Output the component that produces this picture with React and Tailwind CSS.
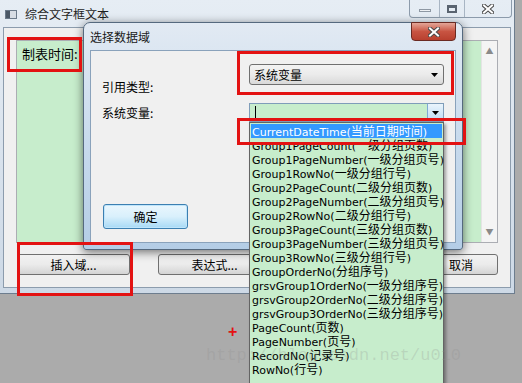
import React from "react";

const items = [
    ["CurrentDateTime", "当前日期时间"],
    ["Group1PageCount", "一级分组页数"],
    ["Group1PageNumber", "一级分组页号"],
    ["Group1RowNo", "一级分组行号"],
    ["Group2PageCount", "二级分组页数"],
    ["Group2PageNumber", "二级分组页号"],
    ["Group2RowNo", "二级分组行号"],
    ["Group3PageCount", "三级分组页数"],
    ["Group3PageNumber", "三级分组页号"],
    ["Group3RowNo", "三级分组行号"],
    ["GroupOrderNo", "分组序号"],
    ["grsvGroup1OrderNo", "一级分组序号"],
    ["grsvGroup2OrderNo", "二级分组序号"],
    ["grsvGroup3OrderNo", "三级分组序号"],
    ["PageCount", "页数"],
    ["PageNumber", "页号"],
    ["RecordNo", "记录号"],
    ["RowNo", "行号"],
];

function CloseGlyph({ className }) {
    return (
        <svg width="12" height="10" viewBox="0 0 12 10" className={className}>
            <path d="M2 1.5 L10 8.5 M10 1.5 L2 8.5" stroke="#4a4a4a" strokeWidth="4" strokeLinecap="square" />
            <path d="M2 1.5 L10 8.5 M10 1.5 L2 8.5" stroke="#ffffff" strokeWidth="2" strokeLinecap="square" />
        </svg>
    );
}

function Arrow() {
    return (
        <svg width="7" height="4" viewBox="0 0 7 4">
            <path d="M0 0 H7 L3.5 4 Z" fill="#000" />
        </svg>
    );
}

function WinButton({ children, className = "" }) {
    return (
        <div
            className={
                "flex items-center justify-center h-[21px] rounded-[3px] border border-[#707070] bg-linear-to-b from-[#f2f2f2] via-[#ebebeb] to-[#d4d4d4] " +
                className
            }
        >
            {children}
        </div>
    );
}

function App() {
    return (
        <div className="relative w-[522px] h-[383px] overflow-hidden bg-[#ababab] text-[12px] text-black font-['Noto_Sans_CJK_SC',sans-serif]">
            {/* main window */}
            <div className="flex flex-col w-[515px] h-[294px] bg-linear-to-b from-[#e6edf4] to-[#cdd9e6] border-r border-b border-[#6d7d8e]">
                <div className="flex items-center h-[27px] pl-[5px]">
                    <div className="flex w-[12px] h-[9px] border border-[#6b7a8a] bg-[#d7dde4] mt-[1px]">
                        <div className="w-[4px] h-full bg-[#4b5866]" />
                    </div>
                    <span className="ml-[8px] text-[#1e1e1e]">综合文字框文本</span>
                    <div className="ml-auto mr-[2px] self-start flex h-[18px] border border-t-0 border-[#8c9bab] rounded-b-[4px] overflow-hidden">
                        <div className="w-[30px] flex items-center justify-center border-r border-[#a8b5c3]">
                            <div className="w-[12px] h-[3px] mt-[4px] bg-[#eef1f4] border border-[#8e98a3]" />
                        </div>
                        <div className="w-[25px] flex items-center justify-center border-r border-[#a8b5c3]">
                            <div className="w-[10px] h-[8px] border-2 border-t-[3px] border-[#5a6470]" />
                        </div>
                        <div className="w-[46px] flex items-center justify-center">
                            <CloseGlyph />
                        </div>
                    </div>
                </div>
                <div className="flex-1 mx-[3px] mb-[5px] flex flex-col bg-[#f0f0f0] border border-[#8c9cad]">
                    <div className="flex mt-[12px] ml-[12px] w-[482px] h-[203px] border border-[#abadb3]">
                        <div className="flex-1 bg-[#c7edcc] pl-[5px] pt-[3px] text-[13px]">制表时间:</div>
                        <div className="w-[16px] flex flex-col items-center justify-between py-[4px] bg-[#f4f4f4] border-l border-[#e4e4e4] text-[8px] text-[#8a8a8a]">
                            <span>▲</span>
                            <span>▼</span>
                        </div>
                    </div>
                    <div className="flex mt-[11px] ml-[13px]">
                        <WinButton className="w-[113px]">插入域...</WinButton>
                        <WinButton className="w-[113px] ml-[28px]">表达式...</WinButton>
                        <WinButton className="w-[74px] ml-[153px]">取消</WinButton>
                    </div>
                </div>
            </div>

            {/* dialog */}
            <div className="absolute left-[83px] top-[22px] w-[380px] h-[228px] flex flex-col rounded-t-[7px] rounded-b-[3px] border border-[#55697e] bg-linear-to-b from-[#e2eaf3] via-[#c9dbed] to-[#b4cde6] shadow-[0_2px_10px_rgba(0,0,0,0.55)]">
                <div className="relative h-[27px] flex items-center pl-[6px]">
                    <span className="text-[#1a1a1a]">选择数据域</span>
                    <div className="absolute left-[327px] top-[-1px] w-[45px] h-[19px] flex items-center justify-center rounded-b-[4px] border border-[#6b2a22] bg-linear-to-b from-[#e3a597] via-[#c85442] to-[#b8402f]">
                        <CloseGlyph />
                    </div>
                </div>
                <div className="mx-[6px] h-[193px] flex flex-col pl-[11px] bg-[#f0f0f0] border border-[#8aa2bb]">
                    <div className="flex items-start h-[21px] mt-[13px]">
                        <span className="w-[147px] mt-[15px] leading-[16px]">引用类型:</span>
                        <div className="w-[195px] h-[21px] flex items-center justify-between pl-[4px] pr-[5px] rounded-[3px] border border-[#707070] bg-linear-to-b from-[#f3f3f3] via-[#ebebeb] to-[#d9d9d9]">
                            <span>系统变量</span>
                            <Arrow />
                        </div>
                    </div>
                    <div className="flex items-center h-[19px] mt-[18px]">
                        <span className="w-[147px]">系统变量:</span>
                        <div className="w-[195px] h-[19px] flex border border-[#7f9db9] bg-[#c7edcc]">
                            <div className="flex-1 pl-[5px] flex items-center">
                                <div className="w-px h-[13px] bg-black" />
                            </div>
                            <div className="w-[16px] flex items-center justify-center border-l border-[#7fa9d3] bg-linear-to-b from-[#eaf4fc] to-[#bcdcf4]">
                                <Arrow />
                            </div>
                        </div>
                    </div>
                    <div className="ml-[1px] mt-[82px] w-[85px] h-[25px] flex items-center justify-center rounded-[3px] border border-[#3c7fb1] bg-linear-to-b from-[#eaf6fd] via-[#d9f0fc] to-[#a7d9f5] shadow-[inset_0_0_0_1px_#bfe5fb]">
                        确定
                    </div>
                </div>
            </div>

            {/* open drop-down list */}
            <div className="absolute left-[249px] top-[122px] w-[195px] h-[270px] p-px bg-[#c7edcc] border border-[#646464] shadow-[2px_2px_3px_rgba(0,0,0,0.35)] text-[11px] font-['DejaVu_Sans','Noto_Sans_CJK_SC',sans-serif]">
                {items.map(([name, cn], i) => (
                    <div
                        key={name}
                        className={
                            i === 0
                                ? "h-[14px] leading-[14px] pl-px whitespace-nowrap bg-[#3399ff] text-white"
                                : "h-[14px] leading-[14px] pl-px whitespace-nowrap"
                        }
                    >
                        {name}(<span className="text-[12px] font-['Noto_Sans_CJK_SC',sans-serif]">{cn}</span>)
                    </div>
                ))}
            </div>

            {/* watermark */}
            <div className="absolute left-[206px] top-[343px] text-[17px] font-['Liberation_Mono',monospace] text-[#8f8f8f]/25 pointer-events-none">
                http://blog.csdn.net/u010
            </div>

            {/* red annotation boxes */}
            <div className="absolute left-[7px] top-[37px] w-[75px] h-[35px] border-[3px] border-[#e31212]" />
            <div className="absolute left-[237px] top-[51px] w-[217px] h-[44px] border-[3px] border-[#e31212]" />
            <div className="absolute left-[237px] top-[118px] w-[229px] h-[27px] border-[3px] border-[#e31212]" />
            <div className="absolute left-[17px] top-[242px] w-[116px] h-[54px] border-[3px] border-[#e31212]" />
            <div className="absolute left-[228px] top-[324px] text-[16px] font-bold leading-[16px] text-[#e31212] font-['Liberation_Sans',sans-serif]">
                +
            </div>
        </div>
    );
}

export default App;
